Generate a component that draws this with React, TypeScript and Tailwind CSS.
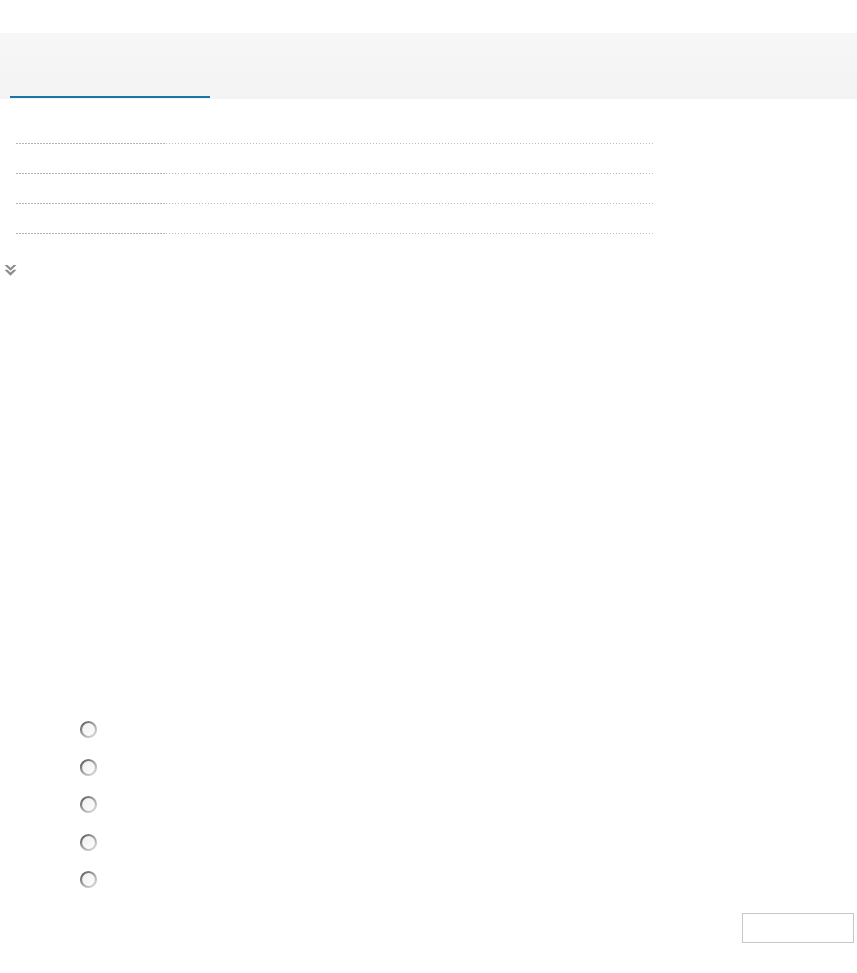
import React from "react";

function Radio() {
  return (
    <svg width="19" height="19" viewBox="0 0 19 19" className="block">
      <defs>
        <linearGradient id="rg" x1="0" y1="0" x2="0.9" y2="1">
          <stop offset="0" stopColor="#555555" />
          <stop offset="0.45" stopColor="#9a9a9a" />
          <stop offset="1" stopColor="#dcdcdc" />
        </linearGradient>
        <linearGradient id="rf" x1="0" y1="0" x2="1" y2="1">
          <stop offset="0" stopColor="#eeeeee" />
          <stop offset="1" stopColor="#ffffff" />
        </linearGradient>
      </defs>
      <circle cx="9.5" cy="9.5" r="7.5" fill="url(#rf)" stroke="url(#rg)" strokeWidth="2.2" />
    </svg>
  );
}

function Row() {
  return (
    <div className="flex h-[30px]">
      <div className="w-[150px] h-full flex items-end">
        <div className="w-full h-px bg-[repeating-linear-gradient(to_right,#b5b5b5_0_2px,transparent_2px_3px)]" />
      </div>
      <div className="w-[489px] h-full flex items-end">
        <div className="w-full h-px bg-[repeating-linear-gradient(to_right,#bdbdbd_0_1px,transparent_1px_3px)]" />
      </div>
    </div>
  );
}

export default function App() {
  return (
    <div className="w-[857px] h-[973px] bg-white font-['Liberation_Sans',Arial,sans-serif] flex flex-col">
      <div className="h-[33px]" />
      <div className="h-[66px] bg-gradient-to-b from-[#f7f7f7] to-[#f3f3f3] flex items-end">
        <div className="ml-[10px] w-[200px] h-[2px] mb-px bg-[#1a75a8]" />
      </div>
      <div className="mt-[15px] ml-[16px] flex flex-col">
        <Row />
        <Row />
        <Row />
        <Row />
      </div>
      <div className="mt-[30px] ml-[4px] w-[13px] h-[13px]">
        <svg width="13" height="13" viewBox="0 0 13 13" className="block">
          <path d="M0.5 1 L3.5 1 L6.5 3.8 L9.5 1 L12.5 1 L6.5 6.8 Z" fill="#8c8c8c" />
          <path d="M0.5 5.8 L3.5 5.8 L6.5 8.6 L9.5 5.8 L12.5 5.8 L6.5 11.8 Z" fill="#8c8c8c" />
        </svg>
      </div>
      <div className="mt-[443px] ml-[79px] flex flex-col gap-[18.5px]">
        <Radio />
        <Radio />
        <Radio />
        <Radio />
        <Radio />
      </div>
      <div className="mt-[24px] self-end mr-[3px] w-[112px] h-[30px] border border-[#c8c8c8] bg-white" />
    </div>
  );
}
